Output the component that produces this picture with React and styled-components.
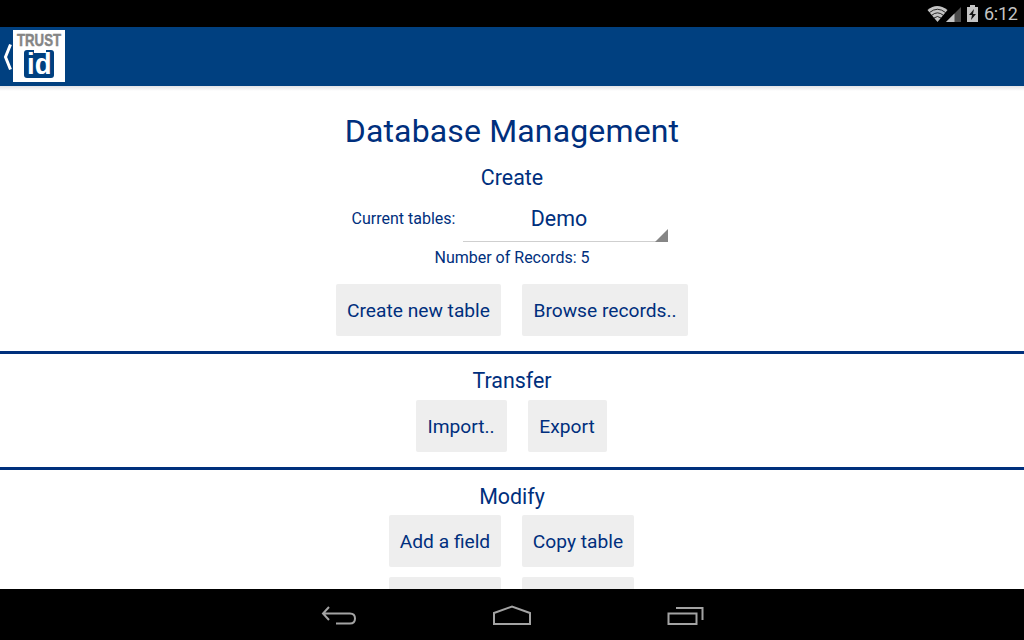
import React from "react";
import styled, { createGlobalStyle } from "styled-components";

const GlobalStyle = createGlobalStyle`
  * {
    box-sizing: border-box;
  }

  body {
    margin: 0;
    background: #000;
    font-family: Roboto, "Noto Sans", sans-serif;
  }
`;

// ---------------- Styled Components ---------------- //

const Screen = styled.div`
  display: flex;
  flex-direction: column;
  width: 1024px;
  height: 640px;
  overflow: hidden;
  background: #000;
`;

const StatusBar = styled.header`
  display: flex;
  align-items: center;
  justify-content: flex-end;
  flex: none;
  height: 27px;
  padding-right: 6px;
  color: #c4c4c4;
`;

const StatusIcons = styled.svg`
  display: block;
  width: 52px;
  height: 20px;
  margin-right: 5px;
`;

const Clock = styled.time`
  width: 34px;
  padding-top: 1px;
  font-size: 18px;
  line-height: 26px;
  letter-spacing: -0.3px;
  white-space: nowrap;
`;

const ActionBar = styled.div`
  flex: none;
  height: 59px;
  background: #004080;
`;

const HomeButton = styled.button`
  display: flex;
  align-items: center;
  height: 59px;
  padding: 0 0 0 3px;
  border: none;
  background: none;
`;

const UpArrow = styled.svg`
  display: block;
  width: 10px;
  height: 59px;
`;

const Logo = styled.svg`
  display: block;
  width: 52px;
  height: 52px;
  margin-bottom: 1px;
`;

const Content = styled.main`
  flex: 1;
  min-height: 0;
  overflow: hidden;
  background: linear-gradient(to bottom, #e2e2e6, #fff 5px);
  color: #002f7d;
`;

const Section = styled.section`
  display: flex;
  flex-direction: column;
  align-items: center;
  height: ${({ $height }) => $height || "auto"};
  padding-top: ${({ $top }) => $top};
  border-bottom: ${({ $last }) => ($last ? "none" : "3px solid #00307c")};
`;

const Title = styled.h1`
  margin: 0 0 11px;
  font-size: 32px;
  font-weight: 400;
  line-height: 44px;
  letter-spacing: 0.15px;
`;

const SectionTitle = styled.h2`
  margin: 0 0 ${({ $gap }) => $gap || "0"};
  font-size: 21.4px;
  font-weight: 400;
  line-height: 28px;
`;

const TableRow = styled.div`
  display: flex;
  align-items: center;
  gap: 8px;
  height: 40px;
  margin-top: 10px;
  padding-right: 4px;
`;

const Label = styled.span`
  padding-bottom: 6px;
  font-size: 16px;
  line-height: 20px;
  white-space: nowrap;
`;

const Spinner = styled.div`
  position: relative;
  width: 205px;
  height: 40px;
  padding-right: 14px;
  border-bottom: 1px solid #cfcfcf;
  font-size: 21.4px;
  line-height: 34px;
  text-align: center;

  &::after {
    content: "";
    position: absolute;
    right: 0;
    bottom: -1px;
    border-left: 13px solid transparent;
    border-bottom: 13px solid #868686;
  }
`;

const RecordCount = styled.p`
  margin: 6px 0 16px;
  font-size: 16px;
  line-height: 20px;
`;

const Buttons = styled.div`
  display: grid;
  grid-template-columns: ${({ $columns }) => $columns};
  column-gap: 21px;
  row-gap: 10px;
  padding-right: ${({ $shift }) => $shift || "0"};
`;

const Button = styled.button`
  height: 52px;
  padding: 1px 0 0;
  border: none;
  border-radius: 2px;
  background: #eee;
  color: inherit;
  font-family: inherit;
  font-size: 19.2px;
  line-height: 24px;
  white-space: nowrap;
`;

const NavBar = styled.nav`
  display: flex;
  justify-content: center;
  gap: 134px;
  flex: none;
  height: 51px;
  padding-top: 12px;
`;

const NavIcon = styled.svg`
  display: block;
  width: 40px;
  height: 28px;
  fill: none;
  stroke: #a3a3a3;
  stroke-width: 2;
`;

// ---------------- Icons ---------------- //

const DeviceStatus = () => (
  <StatusIcons viewBox="0 0 52 20">
    <path d="M0.5 6 Q10 -2 20.5 6 L10.5 18 Z" fill="#c4c4c4" />
    <g fill="none" stroke="#000" strokeWidth="0.8">
      <path d="M2.5 8.5 Q10.5 2 18.5 8.5" />
      <path d="M4.8 11.2 Q10.5 6.5 16.2 11.2" />
      <path d="M7 14 Q10.5 11 14 14" />
    </g>
    <path d="M34 3V18H19Z" fill="#4b4b4b" />
    <path d="M27.5 9.5V18H19Z" fill="#c4c4c4" />
    <path d="M43 1h5v2h3v15H40V3h3Z" fill="#c4c4c4" />
    <path d="M47 5l-5 6h3l-1 5 5-6h-3Z" fill="#111" />
  </StatusIcons>
);

const TrustLogo = () => (
  <Logo viewBox="0 0 52 52">
    <rect width="52" height="52" fill="#fff" />
    <text
      x="4"
      y="16"
      fill="#858585"
      stroke="#858585"
      strokeWidth="0.5"
      fontFamily="Liberation Sans"
      fontSize="17"
      fontWeight="700"
      textLength="44"
      lengthAdjust="spacingAndGlyphs"
    >
      TRUST
    </text>
    <rect x="11" y="20" width="30" height="28" rx="3" fill="#004080" />
    <rect x="21" y="19" width="12" height="4" fill="#fff" />
    <text
      x="14"
      y="43.5"
      fill="#fff"
      fontFamily="Liberation Sans"
      fontSize="30"
      fontWeight="700"
      textLength="24.5"
      lengthAdjust="spacingAndGlyphs"
    >
      id
    </text>
  </Logo>
);

// ---------------- Main Component ---------------- //

const App = () => (
  <>
    <GlobalStyle />
    <Screen>
      <StatusBar>
        <DeviceStatus />
        <Clock>6:12</Clock>
      </StatusBar>

      <ActionBar>
        <HomeButton aria-label="Navigate up">
          <UpArrow viewBox="0 0 10 59">
            <path
              d="M7.5 17.5L2.5 30L7.5 42.5"
              fill="none"
              stroke="#fff"
              strokeWidth="3"
            />
          </UpArrow>
          <TrustLogo />
        </HomeButton>
      </ActionBar>

      <Content>
        <Section $top="23px" $height="268px">
          <Title>Database Management</Title>
          <SectionTitle>Create</SectionTitle>
          <TableRow>
            <Label>Current tables:</Label>
            <Spinner>Demo</Spinner>
          </TableRow>
          <RecordCount>Number of Records: 5</RecordCount>
          <Buttons $columns="165px 166px">
            <Button>Create new table</Button>
            <Button>Browse records..</Button>
          </Buttons>
        </Section>

        <Section $top="13px" $height="116px">
          <SectionTitle $gap="5px">Transfer</SectionTitle>
          <Buttons $columns="91px 79px" $shift="2px">
            <Button>Import..</Button>
            <Button>Export</Button>
          </Buttons>
        </Section>

        <Section $top="13px" $last>
          <SectionTitle $gap="4px">Modify</SectionTitle>
          <Buttons $columns="112px 112px" $shift="1px">
            <Button>Add a field</Button>
            <Button>Copy table</Button>
            <Button />
            <Button />
          </Buttons>
        </Section>
      </Content>

      <NavBar>
        <NavIcon viewBox="0 0 40 28">
          <path d="M5 12.5H32Q37 12.5 37 17.5T32 22.5H18M11 6L5 12.5L11 19" />
        </NavIcon>
        <NavIcon viewBox="0 0 40 28">
          <path d="M2 12L20 5.5L38 12V23H2Z" />
        </NavIcon>
        <NavIcon viewBox="0 0 40 28">
          <path d="M2.5 12.5H30.5V23H2.5ZM10 7H36.5V19" />
        </NavIcon>
      </NavBar>
    </Screen>
  </>
);

export default App;
